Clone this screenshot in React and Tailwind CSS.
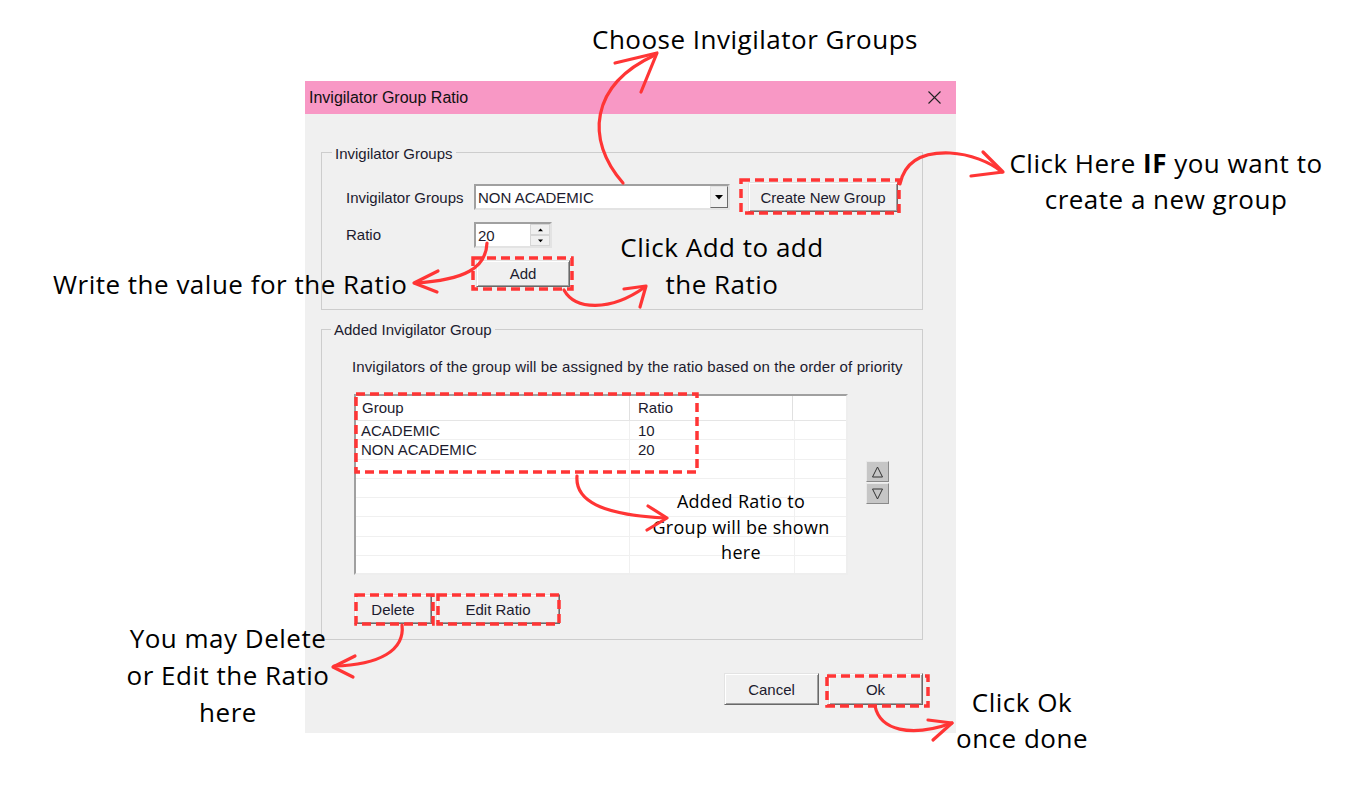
import React from "react";

function WinButton({ w, h, children, className = "" }) {
  return (
    <div
      className={`flex items-center justify-center bg-[#f0f0f0] border border-t-[#e3e3e3] border-l-[#e3e3e3] border-r-[#696969] border-b-[#696969] shadow-[inset_1px_1px_0_#ffffff,inset_-1px_-1px_0_#a0a0a0] ${className}`}
      style={{ width: w, height: h }}
    >
      <span className="relative top-[1px]">{children}</span>
    </div>
  );
}

function TriDown({ size = 7 }) {
  return (
    <svg width={size} height={Math.ceil(size / 2) + 1} viewBox="0 0 8 5">
      <polygon points="0,0 8,0 4,4.5" fill="#000" />
    </svg>
  );
}
function TriUp({ size = 7 }) {
  return (
    <svg width={size} height={Math.ceil(size / 2) + 1} viewBox="0 0 8 5">
      <polygon points="0,4.5 8,4.5 4,0" fill="#000" />
    </svg>
  );
}

function Dialog() {
  const rows = [
    ["ACADEMIC", "10"],
    ["NON ACADEMIC", "20"],
    ["", ""],
    ["", ""],
    ["", ""],
    ["", ""],
    ["", ""],
    ["", ""],
  ];
  return (
    <div className="w-[651px] h-[652px] bg-[#f0f0f0] flex flex-col font-['Liberation_Sans',Arial,sans-serif] text-[15px] text-[#1c1b2e]">
      <div className="h-[33px] bg-[#f898c5] flex items-center justify-between pl-[4px] pr-[15px]">
        <span className="text-[16px] text-[#111]">Invigilator Group Ratio</span>
        <svg width="13" height="13" viewBox="0 0 13 13">
          <path d="M0.5 0.5L12.5 12.5M12.5 0.5L0.5 12.5" stroke="#222" strokeWidth="1.1" />
        </svg>
      </div>
      <div className="pl-[16px] pt-[30px]">
        <fieldset className="w-[602px] h-[166px] border border-[#cdcdcd]">
          <legend className="ml-[10px] px-[3px] leading-[16px]">
            <span className="relative top-[2px]">Invigilator Groups</span>
          </legend>
          <div className="pl-[24px] pt-[22px]">
            <div className="flex items-center h-[30px]">
              <div className="w-[128px] relative top-[1px]">Invigilator Groups</div>
              <div className="w-[256px] h-[26px] bg-white border-2 border-t-[#a0a0a0] border-l-[#a0a0a0] border-r-[#e3e3e3] border-b-[#e3e3e3] flex items-center">
                <div className="flex-1 pl-[2px] leading-[20px] relative top-[1px]">NON ACADEMIC</div>
                <div className="w-[18px] h-full bg-[#f0f0f0] border border-t-[#e3e3e3] border-l-[#e3e3e3] border-r-[#696969] border-b-[#696969] flex items-center justify-center">
                  <TriDown size={8} />
                </div>
              </div>
              <div className="ml-[18px]">
                <WinButton w={150} h={30}>Create New Group</WinButton>
              </div>
            </div>
            <div className="mt-[10px] flex items-center h-[26px]">
              <div className="w-[128px]">Ratio</div>
              <div className="w-[78px] h-[26px] bg-white border-2 border-t-[#a0a0a0] border-l-[#a0a0a0] border-r-[#e3e3e3] border-b-[#e3e3e3] flex">
                <div className="flex-1 pl-[2px] leading-[24px]">20</div>
                <div className="w-[20px] h-full flex flex-col">
                  <div className="flex-1 bg-[#f0f0f0] border border-[#d6d6d6] flex items-center justify-center">
                    <TriUp size={5} />
                  </div>
                  <div className="flex-1 bg-[#f0f0f0] border border-[#d6d6d6] flex items-center justify-center">
                    <TriDown size={5} />
                  </div>
                </div>
              </div>
            </div>
            <div className="mt-[12px] ml-[130px]">
              <WinButton w={94} h={27}>Add</WinButton>
            </div>
          </div>
        </fieldset>

        <fieldset className="mt-[11px] w-[602px] h-[319px] border border-[#cdcdcd]">
          <legend className="ml-[9px] px-[3px] leading-[16px]">
            <span className="relative top-[1px]">Added Invigilator Group</span>
          </legend>
          <div className="pl-[30px] pt-[22px] leading-[16px] whitespace-nowrap tracking-[0.12px]">
            Invigilators of the group will be assigned by the ratio based on the order of priority
          </div>
          <div className="mt-[19px] pl-[32px] flex items-start">
            <div className="w-[494px] h-[181px] bg-white border-2 border-t-[#a0a0a0] border-l-[#a0a0a0] border-r-[#eeeeee] border-b-[#eeeeee] overflow-hidden">
              <div className="flex h-[25px] border-b border-[#e5e5e5] leading-[23px]">
                <div className="w-[274px] pl-[6px] border-r border-[#e0e0e0]">Group</div>
                <div className="w-[163px] pl-[8px] border-r border-[#e0e0e0]">Ratio</div>
                <div className="flex-1"></div>
              </div>
              {rows.map((r, i) => (
                <div key={i} className="flex h-[19.3px] border-b border-[#f0f0f0] leading-[20px]">
                  <div className="w-[274px] pl-[5px] border-r border-[#f0f0f0]">{r[0]}</div>
                  <div className="w-[165px] pl-[8px] border-r border-[#f0f0f0]">{r[1]}</div>
                  <div className="flex-1"></div>
                </div>
              ))}
            </div>
            <div className="ml-[18px] mt-[67px] flex flex-col gap-[1px]">
              {[0, 1].map((k) => (
                <div
                  key={k}
                  className="w-[23px] h-[21px] bg-[#c6c6c6] border border-t-[#e8e8e8] border-l-[#e8e8e8] border-r-[#8a8a8a] border-b-[#8a8a8a] flex items-center justify-center"
                >
                  <svg width="13" height="12" viewBox="0 0 13 12">
                    {k === 0 ? (
                      <polygon points="1.5,11 11.5,11 6.5,1" fill="none" stroke="#333" strokeWidth="1" />
                    ) : (
                      <polygon points="1.5,1 11.5,1 6.5,11" fill="none" stroke="#333" strokeWidth="1" />
                    )}
                  </svg>
                </div>
              ))}
            </div>
          </div>
          <div className="mt-[19px] pl-[32px] flex gap-[4px]">
            <WinButton w={78} h={30}>Delete</WinButton>
            <WinButton w={124} h={30}>Edit Ratio</WinButton>
          </div>
        </fieldset>

        <div className="mt-[33px] ml-[403px] flex gap-[9px]">
          <WinButton w={95} h={32}>Cancel</WinButton>
          <WinButton w={95} h={32}>Ok</WinButton>
        </div>
      </div>
    </div>
  );
}

function Annotations() {
  const big = "absolute font-['Open_Sans',sans-serif] text-[26px] tracking-[0.5px] text-black whitespace-nowrap";
  return (
    <>
      <div className={`${big} left-[592px] top-[21px] leading-[36px]`}>Choose Invigilator Groups</div>
      <div className={`${big} left-[966px] top-[145px] w-[400px] text-center leading-[36px]`}>
        Click Here <b className="font-bold">IF</b> you want to
        <br />
        create a new group
      </div>
      <div className={`${big} left-[53px] top-[266px] leading-[36px]`}>Write the value for the Ratio</div>
      <div className={`${big} left-[602px] top-[229px] w-[240px] text-center leading-[37px]`}>
        Click Add to add
        <br />
        the Ratio
      </div>
      <div className={`${big} left-[98px] top-[620px] w-[260px] text-center leading-[37px]`}>
        You may Delete
        <br />
        or Edit the Ratio
        <br />
        here
      </div>
      <div className={`${big} left-[922px] top-[684px] w-[200px] text-center leading-[36px]`}>
        Click Ok
        <br />
        once done
      </div>
      <div className="absolute font-['Open_Sans',sans-serif] text-[18px] tracking-[0.3px] text-black whitespace-nowrap left-[631px] top-[489px] w-[220px] text-center leading-[25.5px]">
        Added Ratio to
        <br />
        Group will be shown
        <br />
        here
      </div>
    </>
  );
}

function Overlay() {
  const red = "#ff3535";
  const line = { fill: "none", stroke: red, strokeWidth: 3.2, strokeLinecap: "round", strokeLinejoin: "round" };
  const dash = { fill: "none", stroke: red, strokeWidth: 3.5, strokeDasharray: "9 5" };
  return (
    <svg className="absolute left-0 top-0 pointer-events-none" width="1366" height="811" viewBox="0 0 1366 811">
      <rect x="741" y="180" width="158" height="33" {...dash} />
      <rect x="473" y="258" width="99" height="31" {...dash} />
      <rect x="356" y="394" width="341" height="78" {...dash} />
      <rect x="356" y="595" width="77" height="29" {...dash} />
      <rect x="438" y="595" width="121" height="29" {...dash} />
      <rect x="827" y="676" width="101" height="30" {...dash} />

      <path d="M623,183 C585,140 590,85 655,55" {...line} />
      <path d="M615,63 L657,53 L641,92" {...line} />

      <path d="M900,184 C905,160 925,152 950,153 C970,154 990,162 1002,172" {...line} />
      <path d="M983,152 L1003,172 L971,176" {...line} />

      <path d="M487,243 C486,268 465,280 415,283" {...line} />
      <path d="M438,271 L414,283 L437,292" {...line} />

      <path d="M564,290 C575,310 610,312 645,287" {...line} />
      <path d="M624,289 L646,286 L640,307" {...line} />

      <path d="M577,476 C575,500 600,515 666,518" {...line} />
      <path d="M648,506 L667,518 L647,530" {...line} />

      <path d="M402,625 C405,650 380,665 334,666" {...line} />
      <path d="M355,656 L333,667 L353,677" {...line} />

      <path d="M875,706 C880,730 910,738 952,723" {...line} />
      <path d="M928,720 L952,723 L933,740" {...line} />
    </svg>
  );
}

export default function App() {
  return (
    <div className="relative w-[1366px] h-[811px] bg-white overflow-hidden">
      <div className="pl-[305px] pt-[81px]">
        <Dialog />
      </div>
      <Annotations />
      <Overlay />
    </div>
  );
}
